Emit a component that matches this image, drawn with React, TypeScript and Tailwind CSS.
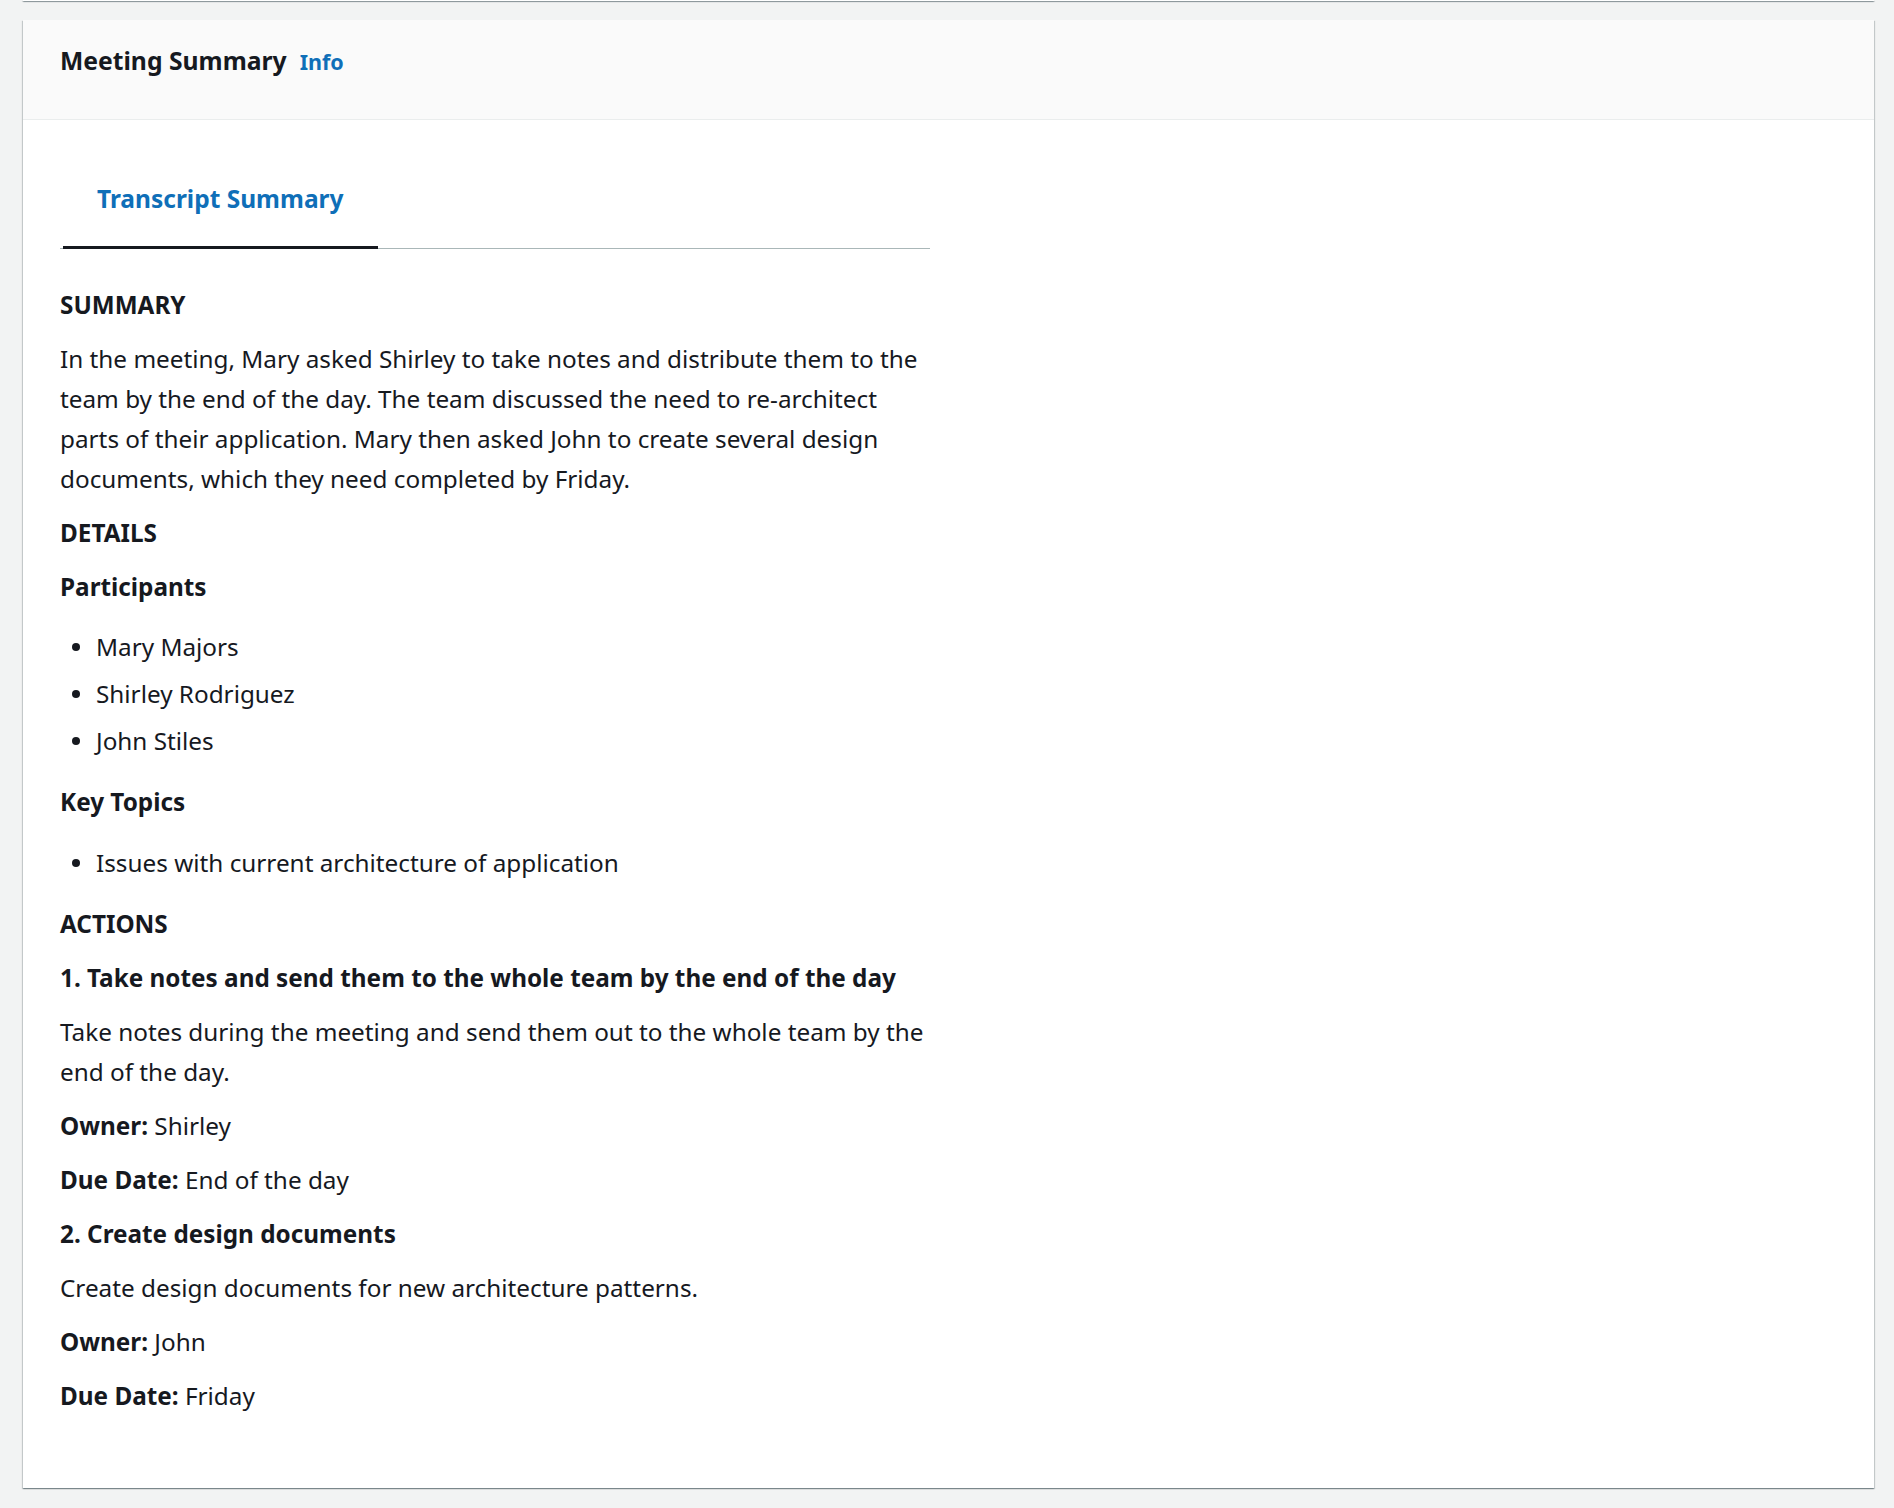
import React from "react";

const font = { fontFamily: '"Noto Sans", "Open Sans", sans-serif' };

export default function App() {
  return (
    <div className="min-h-[1508px] w-full bg-[#f2f3f3] text-[#16191f]" style={font}>
      <div className="ml-[23px] mr-[20px] h-[1px] bg-white shadow-[0_1px_1px_0_rgba(0,28,36,0.3),1px_1px_1px_0_rgba(0,28,36,0.15),-1px_1px_1px_0_rgba(0,28,36,0.15)]" />
      <div className="ml-[23px] mr-[20px] mt-[19px] bg-white shadow-[0_1px_1px_0_rgba(0,28,36,0.3),1px_1px_1px_0_rgba(0,28,36,0.15),-1px_1px_1px_0_rgba(0,28,36,0.15)]">
        <div className="flex h-[100px] items-start border-b border-[#eaeded] bg-[#fafafa] px-[37px] pt-[23px]">
          <h2 className="text-[24.7px] font-bold leading-[36px]">Meeting Summary</h2>
          <a className="ml-[13px] mt-[4px] text-[21.5px] font-bold leading-[30px] text-[#0f6fb8]">Info</a>
        </div>
        <div className="px-[37px] pb-[72px]">
          <div className="w-[870px]">
            <div className="mt-[40px] flex border-b border-[#aab7b8]">
              <div className="ml-[3px] -mb-[1px] border-b-[3px] border-[#16191f] px-[34px] pb-[29px] pt-[21px]">
                <span className="text-[24.5px] font-bold leading-[36px] text-[#0f6fb8]">Transcript Summary</span>
              </div>
            </div>
            <div className="mt-[36px] flex flex-col text-[24.3px] leading-[40px]">
              <p className="font-bold">SUMMARY</p>
              <p className="mt-[14px]">
                In the meeting, Mary asked Shirley to take notes and distribute them to the team by the end of the day. The team discussed the need to re-architect parts of their application. Mary then asked John to create several design documents, which they need completed by Friday.
              </p>
              <p className="mt-[14px] font-bold">DETAILS</p>
              <p className="mt-[14px] font-bold">Participants</p>
              <ul className="mt-[20px] flex flex-col gap-[7px]">
                {["Mary Majors", "Shirley Rodriguez", "John Stiles"].map((n) => (
                  <li key={n} className="flex items-center">
                    <span className="ml-[12px] mr-[16px] h-[8px] w-[8px] rounded-full bg-[#16191f]" />
                    {n}
                  </li>
                ))}
              </ul>
              <p className="mt-[21px] font-bold">Key Topics</p>
              <ul className="mt-[21px] flex flex-col gap-[7px]">
                <li className="flex items-center">
                  <span className="ml-[12px] mr-[16px] h-[8px] w-[8px] rounded-full bg-[#16191f]" />
                  Issues with current architecture of application
                </li>
              </ul>
              <p className="mt-[21px] font-bold">ACTIONS</p>
              <p className="mt-[14px] font-bold">1. Take notes and send them to the whole team by the end of the day</p>
              <p className="mt-[14px]">Take notes during the meeting and send them out to the whole team by the end of the day.</p>
              <p className="mt-[14px]"><span className="font-bold">Owner:</span> Shirley</p>
              <p className="mt-[14px]"><span className="font-bold">Due Date:</span> End of the day</p>
              <p className="mt-[14px] font-bold">2. Create design documents</p>
              <p className="mt-[14px]">Create design documents for new architecture patterns.</p>
              <p className="mt-[14px]"><span className="font-bold">Owner:</span> John</p>
              <p className="mt-[14px]"><span className="font-bold">Due Date:</span> Friday</p>
            </div>
          </div>
        </div>
      </div>
    </div>
  );
}
